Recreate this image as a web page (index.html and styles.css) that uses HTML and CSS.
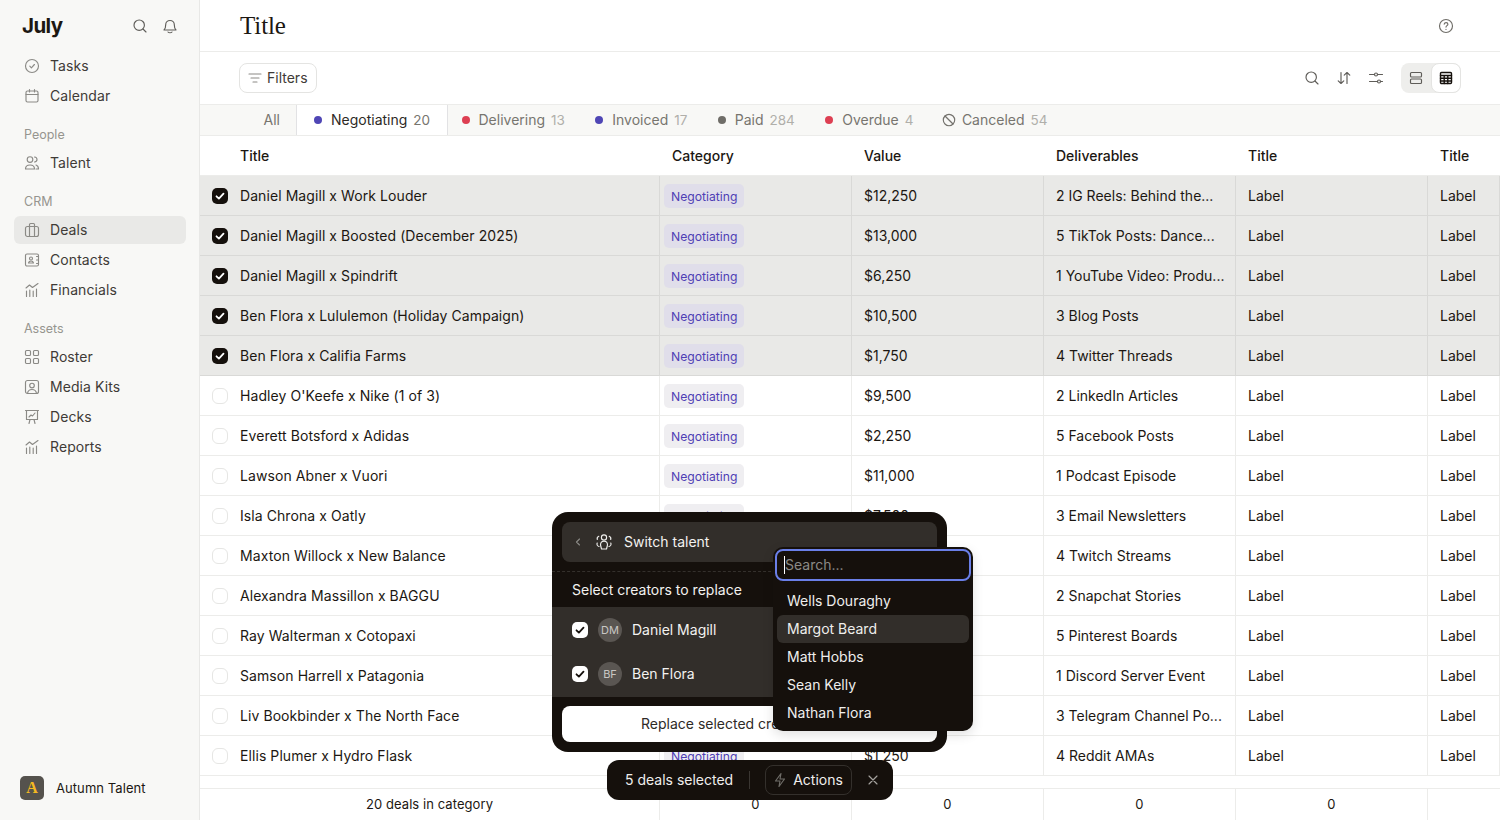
FILE: index.html
```html
<!DOCTYPE html>
<html lang="en">
<head>
<meta charset="utf-8">
<title>July - Deals</title>
<link rel="stylesheet" href="styles.css">
</head>
<body>
<div class="app">
  <aside class="sidebar">
    <div class="brand">
      <span class="logo">July</span>
      <div class="brand-icons">
        <svg class="ico dark" viewBox="0 0 16 16"><circle cx="7.200" cy="7.200" r="5.200"/><path d="M11 11l3 3"/></svg>
        <svg class="ico dark" viewBox="0 0 16 16"><path d="M2 12c1.200-1 1.700-2.200 1.700-5.200a4.300 4.300 0 0 1 8.600 0c0 3 .5 4.200 1.700 5.200z"/><path d="M6 14c.8 1 3.200 1 4 0"/></svg>
      </div>
    </div>
    <nav class="nav-group">
      <a class="nav-item"><svg class="ico" viewBox="0 0 16 16"><circle cx="8" cy="8" r="6.500"/><path d="M5.800 8.200l1.600 1.600 3-3.300"/></svg>Tasks</a>
      <a class="nav-item"><svg class="ico" viewBox="0 0 16 16"><rect x="2" y="3" width="12" height="11" rx="1.500"/><path d="M2 6.500h12M5.500 1.500V4M10.500 1.500V4"/></svg>Calendar</a>
    </nav>
    <nav class="nav-group">
      <div class="nav-label">People</div>
      <a class="nav-item"><svg class="ico" viewBox="0 0 16 16"><circle cx="6" cy="4.500" r="2.800"/><path d="M1.500 14c0-2.500 1.800-4 4.500-4s4.500 1.500 4.500 4zM10.500 2c1.500.2 2.500 1.200 2.500 2.500S12 6.800 10.500 7M12 10c1.500.5 2.500 2 2.500 4H12"/></svg>Talent</a>
    </nav>
    <nav class="nav-group">
      <div class="nav-label">CRM</div>
      <a class="nav-item active"><svg class="ico" viewBox="0 0 16 16"><rect x="1.500" y="4.500" width="13" height="10" rx="2"/><path d="M5.500 14.500v-12a1 1 0 0 1 1-1h3a1 1 0 0 1 1 1v12"/></svg>Deals</a>
      <a class="nav-item"><svg class="ico" viewBox="0 0 16 16"><rect x="1.500" y="2" width="13" height="12" rx="1.500"/><circle cx="7" cy="6.500" r="1.500"/><path d="M4.500 11c.3-1.300 1.200-2 2.500-2s2.200.7 2.500 2zM12.500 4.500h2M12.500 8h2M12.500 11.500h2"/></svg>Contacts</a>
      <a class="nav-item"><svg class="ico" viewBox="0 0 16 16"><path d="M2.500 14.500V9M5.800 14.500V8M9.200 14.500V9M12.500 14.500V7M2 6l3.500-3 3 2.500L14 1.500"/></svg>Financials</a>
    </nav>
    <nav class="nav-group">
      <div class="nav-label">Assets</div>
      <a class="nav-item"><svg class="ico" viewBox="0 0 16 16"><rect x="1.500" y="1.500" width="5" height="5" rx="1"/><rect x="9.500" y="1.500" width="5" height="5" rx="1"/><rect x="1.500" y="9.500" width="5" height="5" rx="1"/><rect x="9.500" y="9.500" width="5" height="5" rx="1"/></svg>Roster</a>
      <a class="nav-item"><svg class="ico" viewBox="0 0 16 16"><rect x="1.500" y="1.500" width="13" height="13" rx="2"/><circle cx="8" cy="6.500" r="2.300"/><path d="M3.500 14.500c.3-2.500 2-4 4.500-4s4.200 1.500 4.500 4"/></svg>Media Kits</a>
      <a class="nav-item"><svg class="ico" viewBox="0 0 16 16"><path d="M1.500 1.500h13M2.500 1.500v9h11v-9M5 14.500l1-4M11 14.500l-1-4M5 8l2-2 1.500 1L11 4"/></svg>Decks</a>
      <a class="nav-item"><svg class="ico" viewBox="0 0 16 16"><path d="M2.500 14.500V9M5.800 14.500V8M9.200 14.500V9M12.500 14.500V7M2 6l3.500-3 3 2.500L14 1.500"/></svg>Reports</a>
    </nav>
    <div class="account"><span class="account-mark">A</span><span>Autumn Talent</span></div>
  </aside>

  <main class="main">
    <header class="topbar">
      <h1 class="page-title">Title</h1>
      <svg class="ico help" viewBox="0 0 16 16"><circle cx="8" cy="8" r="6.500"/><path d="M6.200 6.200c.2-1 1-1.600 1.900-1.600 1 0 1.800.7 1.800 1.600 0 1.400-1.900 1.500-1.900 2.900M8 11.200v.3"/></svg>
    </header>
    <div class="toolbar">
      <button class="filters"><svg class="ico" viewBox="0 0 16 16"><path d="M2 4h12M4 8h8M6 12h4"/></svg>Filters</button>
      <div class="tool-icons">
        <span class="tool"><svg class="ico dark" viewBox="0 0 16 16"><circle cx="7.200" cy="7.200" r="5.200"/><path d="M11 11l3 3"/></svg></span>
        <span class="tool"><svg class="ico dark" viewBox="0 0 16 16"><path d="M5 2.500v11M2.200 10.800L5 13.500l2.800-2.700M11 13.500v-11M8.200 5.200L11 2.500l2.800 2.700"/></svg></span>
        <span class="tool"><svg class="ico dark" viewBox="0 0 16 16"><path d="M1.500 4.500h5M9.500 4.500h5M1.500 11.500h8M12.500 11.500h2"/><circle cx="8" cy="4.500" r="1.500"/><circle cx="11" cy="11.500" r="1.500"/></svg></span>
      </div>
      <div class="view-toggle">
        <span class="view-opt"><svg class="ico dark" viewBox="0 0 16 16"><rect x="2.500" y="2.500" width="11" height="4.500" rx="1"/><rect x="2.500" y="9" width="11" height="4.500" rx="1"/></svg></span>
        <span class="view-opt on"><svg class="ico black" viewBox="0 0 16 16"><rect x="2.500" y="2.500" width="11" height="11" rx="1"/><path d="M2.500 5.500h11M2.500 8.200h11M2.500 11h11M6.200 5.500v8M9.800 5.500v8"/></svg></span>
      </div>
    </div>
    <div class="tabs">
      <span class="tab-all">All</span>
      <span class="tab current"><i class="dot indigo"></i><b>Negotiating</b><em>20</em></span>
      <span class="tab"><i class="dot red"></i><b>Delivering</b><em>13</em></span>
      <span class="tab"><i class="dot indigo"></i><b>Invoiced</b><em>17</em></span>
      <span class="tab"><i class="dot grey"></i><b>Paid</b><em>284</em></span>
      <span class="tab"><i class="dot red"></i><b>Overdue</b><em>4</em></span>
      <span class="tab"><svg class="ico ban" viewBox="0 0 14 14"><circle cx="7" cy="7" r="5.700"/><path d="M3 3l8 8"/></svg><b>Canceled</b><em>54</em></span>
    </div>

    <div class="table">
      <div class="row head"><div class="cell first">Title</div><div class="cell">Category</div><div class="cell">Value</div><div class="cell">Deliverables</div><div class="cell">Title</div><div class="cell">Title</div></div>

      <div class="row sel"><div class="cell first"><span class="check on"><svg viewBox="0 0 16 16"><path d="M4.500 8.300l2.400 2.300 4.600-5"/></svg></span>Daniel Magill x Work Louder</div><div class="cell tagcell"><span class="tag">Negotiating</span></div><div class="cell">$12,250</div><div class="cell">2 IG Reels: Behind the...</div><div class="cell">Label</div><div class="cell">Label</div></div>
      <div class="row sel"><div class="cell first"><span class="check on"><svg viewBox="0 0 16 16"><path d="M4.500 8.300l2.400 2.300 4.600-5"/></svg></span>Daniel Magill x Boosted (December 2025)</div><div class="cell tagcell"><span class="tag">Negotiating</span></div><div class="cell">$13,000</div><div class="cell">5 TikTok Posts: Dance...</div><div class="cell">Label</div><div class="cell">Label</div></div>
      <div class="row sel"><div class="cell first"><span class="check on"><svg viewBox="0 0 16 16"><path d="M4.500 8.300l2.400 2.300 4.600-5"/></svg></span>Daniel Magill x Spindrift</div><div class="cell tagcell"><span class="tag">Negotiating</span></div><div class="cell">$6,250</div><div class="cell">1 YouTube Video: Produ...</div><div class="cell">Label</div><div class="cell">Label</div></div>
      <div class="row sel"><div class="cell first"><span class="check on"><svg viewBox="0 0 16 16"><path d="M4.500 8.300l2.400 2.300 4.600-5"/></svg></span>Ben Flora x Lululemon (Holiday Campaign)</div><div class="cell tagcell"><span class="tag">Negotiating</span></div><div class="cell">$10,500</div><div class="cell">3 Blog Posts</div><div class="cell">Label</div><div class="cell">Label</div></div>
      <div class="row sel"><div class="cell first"><span class="check on"><svg viewBox="0 0 16 16"><path d="M4.500 8.300l2.400 2.300 4.600-5"/></svg></span>Ben Flora x Califia Farms</div><div class="cell tagcell"><span class="tag">Negotiating</span></div><div class="cell">$1,750</div><div class="cell">4 Twitter Threads</div><div class="cell">Label</div><div class="cell">Label</div></div>

      <div class="row"><div class="cell first"><span class="check"></span>Hadley O'Keefe x Nike (1 of 3)</div><div class="cell tagcell"><span class="tag">Negotiating</span></div><div class="cell">$9,500</div><div class="cell">2 LinkedIn Articles</div><div class="cell">Label</div><div class="cell">Label</div></div>
      <div class="row"><div class="cell first"><span class="check"></span>Everett Botsford x Adidas</div><div class="cell tagcell"><span class="tag">Negotiating</span></div><div class="cell">$2,250</div><div class="cell">5 Facebook Posts</div><div class="cell">Label</div><div class="cell">Label</div></div>
      <div class="row"><div class="cell first"><span class="check"></span>Lawson Abner x Vuori</div><div class="cell tagcell"><span class="tag">Negotiating</span></div><div class="cell">$11,000</div><div class="cell">1 Podcast Episode</div><div class="cell">Label</div><div class="cell">Label</div></div>
      <div class="row"><div class="cell first"><span class="check"></span>Isla Chrona x Oatly</div><div class="cell tagcell"><span class="tag">Negotiating</span></div><div class="cell">$7,500</div><div class="cell">3 Email Newsletters</div><div class="cell">Label</div><div class="cell">Label</div></div>
      <div class="row"><div class="cell first"><span class="check"></span>Maxton Willock x New Balance</div><div class="cell tagcell"><span class="tag">Negotiating</span></div><div class="cell">$4,000</div><div class="cell">4 Twitch Streams</div><div class="cell">Label</div><div class="cell">Label</div></div>
      <div class="row"><div class="cell first"><span class="check"></span>Alexandra Massillon x BAGGU</div><div class="cell tagcell"><span class="tag">Negotiating</span></div><div class="cell">$3,250</div><div class="cell">2 Snapchat Stories</div><div class="cell">Label</div><div class="cell">Label</div></div>
      <div class="row"><div class="cell first"><span class="check"></span>Ray Walterman x Cotopaxi</div><div class="cell tagcell"><span class="tag">Negotiating</span></div><div class="cell">$5,750</div><div class="cell">5 Pinterest Boards</div><div class="cell">Label</div><div class="cell">Label</div></div>
      <div class="row"><div class="cell first"><span class="check"></span>Samson Harrell x Patagonia</div><div class="cell tagcell"><span class="tag">Negotiating</span></div><div class="cell">$8,000</div><div class="cell">1 Discord Server Event</div><div class="cell">Label</div><div class="cell">Label</div></div>
      <div class="row"><div class="cell first"><span class="check"></span>Liv Bookbinder x The North Face</div><div class="cell tagcell"><span class="tag">Negotiating</span></div><div class="cell">$6,500</div><div class="cell">3 Telegram Channel Po...</div><div class="cell">Label</div><div class="cell">Label</div></div>
      <div class="row"><div class="cell first"><span class="check"></span>Ellis Plumer x Hydro Flask</div><div class="cell tagcell"><span class="tag">Negotiating</span></div><div class="cell">$1,250</div><div class="cell">4 Reddit AMAs</div><div class="cell">Label</div><div class="cell">Label</div></div>
    </div>

    <div class="row totals"><div class="cell">20 deals in category</div><div class="cell">0</div><div class="cell">0</div><div class="cell">0</div><div class="cell">0</div><div class="cell"></div></div>
  </main>
</div>

<section class="modal">
  <div class="modal-head">
    <svg class="ico chev" viewBox="0 0 12 12"><path d="M7.500 3L4.500 6l3 3"/></svg>
    <svg class="ico light" viewBox="0 0 18 18"><circle cx="9" cy="4.500" r="2.600"/><path d="M5.500 12c0-2.300 1.500-3.800 3.500-3.800s3.500 1.500 3.500 3.800l-1 4h-5zM3.800 3.300C2.400 3.900 1.900 5 2.300 6.500M14.200 3.300c1.400.6 1.900 1.700 1.500 3.200M2.200 10c-.6 1.500 0 3 1.800 3.500M15.800 10c.6 1.500 0 3-1.800 3.500"/></svg>
    <span>Switch talent</span>
  </div>
  <div class="modal-sub">Select creators to replace</div>
  <div class="modal-list">
    <div class="creator"><span class="check white"><svg viewBox="0 0 16 16"><path d="M4.500 8.300l2.400 2.300 4.600-5"/></svg></span><span class="avatar">DM</span>Daniel Magill</div>
    <div class="creator"><span class="check white"><svg viewBox="0 0 16 16"><path d="M4.500 8.300l2.400 2.300 4.600-5"/></svg></span><span class="avatar">BF</span>Ben Flora</div>
  </div>
  <button class="replace">Replace selected creators with</button>
</section>

<section class="picker">
  <div class="search"><span class="caret"></span><span>Search...</span></div>
  <ul class="options">
    <li>Wells Douraghy</li>
    <li class="hover">Margot Beard</li>
    <li>Matt Hobbs</li>
    <li>Sean Kelly</li>
    <li>Nathan Flora</li>
  </ul>
</section>

<div class="selbar">
  <span class="sel-count">5 deals selected</span>
  <span class="sel-divider"></span>
  <button class="sel-actions"><svg class="ico bolt" viewBox="0 0 16 16"><path d="M9 1.500L3.500 9H8l-1 5.500L12.500 7H8z"/></svg>Actions</button>
  <svg class="ico sel-x" viewBox="0 0 16 16"><path d="M4 4l8 8M12 4l-8 8"/></svg>
</div>
</body>
</html>
```
FILE: styles.css
```css
* { box-sizing: border-box; }
html, body { margin: 0; height: 100%; overflow: hidden; }
body { font-family: Inter, "Liberation Sans", sans-serif; font-size: 14px; color: #1c1712; background: #fff; }
button { font: inherit; }

.ico { width: 16px; height: 16px; flex: none; fill: none; stroke: #8b8a86; stroke-width: 1.15; stroke-linecap: round; stroke-linejoin: round; }
.ico.dark { stroke: #5f5d59; }
.ico.black { stroke: #15100c; stroke-width: 1.4; }
.ico.light { stroke: #efeeec; }
.ico.help { stroke: #6f6d68; }

.app { display: flex; height: 820px; }

.sidebar { width: 200px; flex: none; display: flex; flex-direction: column; padding: 0 13px 0 14px; background: #f8f8f6; border-right: 1px solid #e8e8e6; color: #3f3b37; }
.brand { display: flex; align-items: center; justify-content: space-between; height: 52px; padding: 0 8px; }
.logo { margin-bottom: 2px; font-family: Inter, sans-serif; font-weight: 700; font-size: 20.5px; letter-spacing: -.6px; color: #1c1712; }
.brand-icons { display: flex; gap: 14px; }
.nav-group { display: flex; flex-direction: column; gap: 2px; margin-bottom: 14px; }
.nav-label { height: 21px; line-height: 21px; margin: 0 0 2px 10px; font-size: 12.5px; color: #96958f; }
.nav-item { display: flex; align-items: center; gap: 10px; height: 28px; padding: 0 0 1px 10px; border-radius: 6px; letter-spacing: .08px; }
.nav-item .ico { margin-top: 1px; }
.nav-item.active { background: #e9e9e7; }
.account { margin-top: auto; display: flex; align-items: center; gap: 12px; padding: 0 0 20px 6px; font-size: 13px; letter-spacing: .07px; color: #1c1712; }
.account-mark { width: 24px; height: 24px; border-radius: 5px; background: #55524d; color: #f5b921; font-family: "Liberation Serif", serif; font-weight: 700; font-size: 16px; line-height: 24px; text-align: center; }

.main { flex: 1; min-width: 0; display: flex; flex-direction: column; }
.topbar { height: 52px; flex: none; display: flex; align-items: center; justify-content: space-between; padding: 0 46px 0 40px; border-bottom: 1px solid #ececea; }
.page-title { margin: 0; font-family: "Liberation Serif", serif; font-weight: 400; font-size: 25px; letter-spacing: -.1px; color: #1c1712; }
.toolbar { height: 53px; flex: none; display: flex; align-items: center; padding: 0 39px; border-bottom: 1px solid #ececea; }
.filters { display: flex; align-items: center; gap: 4px; height: 30px; width: 78px; padding: 0 0 1px 7px; border: 1px solid #e4e4e2; border-radius: 8px; background: #fff; color: #3f3b37; }
.filters .ico { margin-top: 1px; }
.tool-icons { margin-left: auto; display: flex; }
.tool { width: 32px; height: 32px; display: flex; align-items: center; justify-content: center; }
.view-toggle { margin-left: 9px; display: flex; width: 60px; height: 30px; border-radius: 8px; background: #eeeeec; }
.view-opt { width: 30px; display: flex; align-items: center; justify-content: center; border-radius: 8px; }
.view-opt.on { background: #fff; border: 1px solid #e4e4e2; }

.tabs { height: 31px; flex: none; display: flex; align-items: stretch; background: #f8f8f6; border-bottom: 1px solid #ececea; color: #77756f; }
.tab-all { width: 97px; padding-right: 16px; text-align: right; line-height: 30px; border-right: 1px solid #e2e2e4; }
.tab { display: flex; align-items: center; padding: 0 17px 1px 13.4px; }
.tab.current { padding: 0 17px 1px; background: #fff; color: #2e2a26; border-right: 1px solid #e2e2e4; }
.tab b { font-weight: 400; margin: 0 6px 0 9px; }
.tab em { font-style: normal; font-size: 13.5px; color: #b0afaa; }
.tab.current em { color: #77756f; }
.dot { width: 8px; height: 8px; border-radius: 50%; flex: none; margin-top: 1px; }
.dot.indigo { background: #4f46b5; }
.dot.red { background: #dd3f52; }
.dot.grey { background: #6f6d68; }
.ban { width: 14px; height: 14px; stroke: #74726d; margin: 1px 0 0 -2px; }
.tab .ban + b { margin-left: 6px; }

.table { flex: 1; min-height: 0; overflow: hidden; }
.row { display: grid; grid-template-columns: 460px 192px 192px 192px 192px 1fr; height: 40px; }
.cell { display: flex; align-items: center; min-width: 0; padding-left: 12px; border-right: 1px solid #ececea; border-bottom: 1px solid #ececea; white-space: nowrap; overflow: hidden; }
.cell.first { padding-left: 12px; gap: 12px; letter-spacing: .075px; }
.cell.tagcell { padding-left: 4px; }
.head .cell { border-right: 0; font-weight: 500; letter-spacing: 0; }
.head .cell.first { padding-left: 40px; }
.sel .cell { background: #e9e9e7; border-color: #d9d9d7; }
.tag { height: 24px; line-height: 25px; padding: 0 7px; border-radius: 5px; background: #efeef1; color: #4f3fb5; font-size: 12.2px; }
.sel .tag { background: #e0deea; }
.check { width: 16px; height: 16px; flex: none; border-radius: 6px; border: 1px solid #e6e6e4; background: #fff; }
.check svg { display: block; width: 16px; height: 16px; fill: none; stroke: #fff; stroke-width: 1.8; stroke-linecap: round; stroke-linejoin: round; }
.check.on { background: #15100c; border: 0; border-radius: 5px; }
.check.white { background: #fff; border: 0; border-radius: 5px; }
.check.white svg { stroke: #15100c; }

.totals { flex: none; height: 32px; border-top: 1px solid #ececea; }
.totals .cell { justify-content: center; padding: 0 0 1px; border-bottom: 0; font-size: 13px; letter-spacing: .07px; }
.totals .cell:last-child { border-right: 0; }

.modal { position: absolute; left: 552px; top: 512px; width: 395px; height: 240px; padding: 10px; border-radius: 16px; background: #15100c; color: #f3f2f0; }
.modal-head { display: flex; align-items: center; height: 40px; padding-left: 10px; border-radius: 8px; background: #322e2a; line-height: 16px; }
.chev { width: 12px; height: 12px; stroke: #8b8a86; margin-right: 11px; }
.modal-head .light { margin-right: 11px; width: 18px; height: 18px; }
.modal-sub { margin: 9px -10px 0; height: 36px; padding-left: 20px; line-height: 35px; border-top: 1px dashed #34302c; }
.modal-list { margin: 0 -10px; height: 90px; padding-top: 1px; background: #322e2a; }
.creator { display: flex; align-items: center; height: 44px; padding-left: 20px; line-height: 16px; }
.avatar { width: 24px; height: 24px; margin: 0 10px; border-radius: 50%; background: #5a5652; color: #c9c7c4; font-size: 11px; line-height: 24px; text-align: center; }
.replace { display: block; width: 100%; height: 36px; margin-top: 9px; border: 0; border-radius: 8px; background: #fff; color: #2e2a26; text-align: left; padding: 0 0 2px 79px; }

.picker { position: absolute; left: 773px; top: 547px; width: 200px; height: 184px; padding: 2px 4px; border-radius: 10px; background: #15100c; color: #efeeec; box-shadow: 0 4px 12px rgba(0,0,0,.12); }
.search { display: flex; align-items: center; height: 32px; margin: 0 -2px 0 -2px; padding: 0 0 1px 7px; border: 2px solid #6a7fe8; border-radius: 8px; color: #8b8a86; }
.caret { width: 1px; height: 18px; background: #fff; }
.options { list-style: none; margin: 6px 0 0; padding: 0; }
.options li { height: 28px; line-height: 28px; padding-left: 10px; border-radius: 6px; }
.options .hover { background: #322e2a; }

.selbar { position: absolute; left: 607px; top: 760px; width: 286px; height: 40px; display: flex; align-items: center; padding-left: 18px; border-radius: 12px; background: #15100c; color: #efeeec; line-height: 16px; }
.sel-divider { width: 1px; height: 18px; margin: 0 15px 0 16px; background: #3a3632; }
.sel-actions { display: flex; align-items: center; gap: 5px; width: 87px; height: 30px; padding: 0 0 0 6px; border: 1px solid #34302c; border-radius: 8px; background: transparent; color: #efeeec; line-height: 16px; }
.bolt { stroke: #6f6d68; }
.sel-x { margin-left: 13px; stroke: #a5a39f; }
```
